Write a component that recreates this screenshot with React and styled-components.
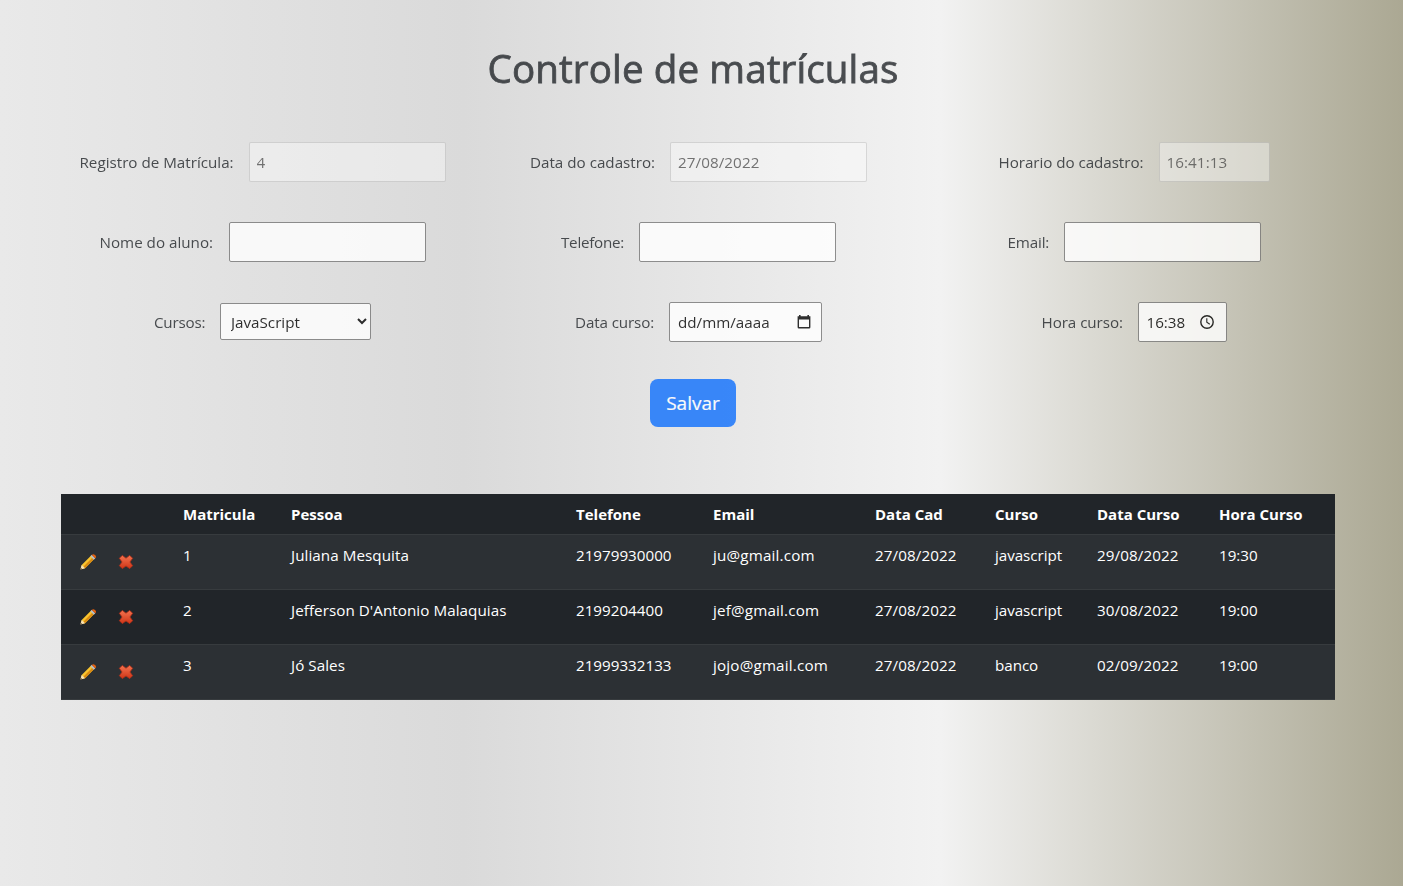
import React from "react";
import styled, { createGlobalStyle } from "styled-components";

const GlobalStyle = createGlobalStyle`
  *, *::before, *::after { box-sizing: border-box; }
  html, body { margin: 0; padding: 0; }
  body {
    font-family: "Open Sans", "Noto Sans", sans-serif;
    font-size: 15.2px;
    line-height: 24px;
    color: #212529;
  }
`;

const Page = styled.main`
  min-height: 886px;
  overflow: hidden;
  background: linear-gradient(to right, #e9e9e9 0%, #dadada 33%, #f2f2f2 67%, #aba893 100%);
`;

const Form = styled.form`
  width: 1386px;
  padding-top: 44px;
  display: flex;
  flex-direction: column;
  align-items: center;
  opacity: 0.8;
`;

const Title = styled.h1`
  margin: 0 0 50px;
  font-size: 38.6px;
  font-weight: 500;
  line-height: 48px;
  letter-spacing: 0.1px;
  -webkit-text-stroke: 0.8px currentColor;
  white-space: nowrap;
`;

const Fields = styled.div`
  display: grid;
  grid-template-columns: 437px 435px 436px;
  grid-template-rows: repeat(3, 40px);
  row-gap: 40px;
  margin-left: 10px;
`;

const Field = styled.div`
  display: flex;
  justify-content: center;
  align-items: center;
  gap: 15px;
`;

const Label = styled.label`
  width: ${(p) => p.$width}px;
  letter-spacing: ${(p) => p.$spacing || 0}px;
  white-space: nowrap;
`;

const Input = styled.input`
  width: ${(p) => p.$width || 197}px;
  height: 40px;
  padding: 1px 7px;
  border: 1px solid #767676;
  border-radius: 2px;
  background: #fff;
  font: inherit;
  letter-spacing: 0.08px;
  color: #212529;
  &:disabled {
    color: #545454;
    border-color: rgba(118, 118, 118, 0.3);
    background: rgba(255, 255, 255, 0.48);
  }
`;

const Select = styled.select`
  width: 151px;
  height: 37px;
  margin-top: -1px;
  padding: 0 6px;
  border: 1px solid #767676;
  border-radius: 2px;
  background: #fff;
  font: inherit;
  color: #000;
`;

const Picker = styled.div`
  width: ${(p) => p.$width}px;
  height: 40px;
  padding: 0 ${(p) => p.$end}px 0 8px;
  display: flex;
  align-items: center;
  justify-content: space-between;
  border: 1px solid #767676;
  border-radius: 2px;
  background: #fff;
  color: #000;
`;

const SaveButton = styled.button`
  width: 86px;
  height: 48px;
  margin-top: 37px;
  padding: 0;
  border: 0;
  border-radius: 8px;
  background: #0d6efd;
  color: #fff;
  font: inherit;
  font-size: 19px;
  -webkit-text-stroke: 0.2px currentColor;
`;

const Table = styled.table`
  width: 1274px;
  margin: 67px 0 0 61px;
  table-layout: fixed;
  border-collapse: separate;
  border-spacing: 0;
  background: #212529;
  color: #fff;
`;

const Row = styled.tr`
  height: ${(p) => (p.$head ? 41 : 55)}px;
  background: ${(p) => (p.$striped ? "#2c3034" : "#212529")};
`;

const Cell = styled.td`
  padding: 8px;
  border-bottom: 1px solid #373b3e;
  vertical-align: top;
  text-align: left;
  white-space: nowrap;
  letter-spacing: ${(p) => p.$spacing || 0}px;
`;

const HeadCell = styled(Cell)`
  font-size: 15px;
  font-weight: 700;
`;

const Actions = styled.div`
  display: flex;
  gap: 22px;
  padding: 11px 0 0 11px;
`;

const Icon = styled.svg`
  display: block;
  width: 16px;
  height: 16px;
`;

const CalendarIcon = () => (
  <Icon viewBox="0 0 16 16" fill="#000" fillRule="evenodd">
    <path d="M3 1h1.6v1.3h6.8V1H13v1.3h1.4V13.2q0 1.3-1.3 1.3H2.9q-1.3 0-1.3-1.3V2.3H3V1Zm0 4.6v7.5h10V5.6H3Z" />
  </Icon>
);

const ClockIcon = () => (
  <Icon viewBox="0 0 16 16" fill="none" stroke="#000" strokeWidth="1.4">
    <circle cx="8" cy="8" r="6.2" />
    <path d="M7.8 4.2v4l3 2.1" strokeWidth="1.1" />
  </Icon>
);

const PencilIcon = () => (
  <Icon viewBox="0 0 16 16">
    <path d="M.4 15.6 1.7 11 11.4 1.3l3.3 3.3L5 14.3Z" fill="#fac52e" />
    <path d="M3.3 12.8 13 3l1.7 1.6L5 14.3Z" fill="#d98a12" />
    <path d="M.4 15.6 1.7 11l1.6 1.5L5 14.3Z" fill="#f8e2b5" />
    <path d="M.1 15.9.9 13.7l1.4 1.5Z" fill="#4c433c" />
    <path d="m10.4 2.3 1.5-1.5 3.4 3.4-1.5 1.5Z" fill="#b6bec5" />
    <path d="M11.8.9Q13.2-.4 15 1t.4 3.2Z" fill="#e7600d" />
  </Icon>
);

const CrossIcon = () => (
  <Icon viewBox="0 0 16 16">
    <defs>
      <linearGradient id="crossFill" x1="0" y1="0" x2="0" y2="1">
        <stop offset="0" stopColor="#f47450" />
        <stop offset="1" stopColor="#cf3517" />
      </linearGradient>
    </defs>
    <path
      d="M4.3 1.4 8 4.3l3.7-2.9 2.9 2.9L11.9 8l2.7 3.7-2.9 2.9L8 11.9l-3.7 2.7-2.9-2.9L4.1 8 1.4 4.3Z"
      fill="url(#crossFill)"
      stroke="#ba3018"
      strokeWidth=".8"
      strokeLinejoin="round"
    />
  </Icon>
);

const columns = [
  ["", 114],
  ["Matricula", 108],
  ["Pessoa", 285],
  ["Telefone", 137],
  ["Email", 162],
  ["Data Cad", 120],
  ["Curso", 102],
  ["Data Curso", 122],
  ["Hora Curso", 124],
];

/* tracking for each data column, in the order of the columns above */
const tracking = [0, 0.06, 0, 0.18, 0.1, -0.05, 0.1, 0];

const students = [
  ["1", "Juliana Mesquita", "21979930000", "ju@gmail.com", "27/08/2022", "javascript", "29/08/2022", "19:30"],
  ["2", "Jefferson D'Antonio Malaquias", "2199204400", "jef@gmail.com", "27/08/2022", "javascript", "30/08/2022", "19:00"],
  ["3", "Jó Sales", "21999332133", "jojo@gmail.com", "27/08/2022", "banco", "02/09/2022", "19:00"],
];

export default function App() {
  return (
    <Page>
      <GlobalStyle />
      <Form>
        <Title>Controle de matrículas</Title>
        <Fields>
          <Field>
            <Label $width={154}>Registro de Matrícula:</Label>
            <Input disabled defaultValue="4" />
          </Field>
          <Field>
            <Label $width={125}>Data do cadastro:</Label>
            <Input disabled defaultValue="27/08/2022" />
          </Field>
          <Field>
            <Label $width={145} $spacing={-0.05}>Horario do cadastro:</Label>
            <Input disabled defaultValue="16:41:13" $width={111} />
          </Field>
          <Field>
            <Label $width={114}>Nome do aluno:</Label>
            <Input />
          </Field>
          <Field>
            <Label $width={63} $spacing={-0.25}>Telefone:</Label>
            <Input />
          </Field>
          <Field>
            <Label $width={41} $spacing={-0.15}>Email:</Label>
            <Input />
          </Field>
          <Field>
            <Label $width={51} $spacing={-0.2}>Cursos:</Label>
            <Select defaultValue="JavaScript">
              <option>JavaScript</option>
            </Select>
          </Field>
          <Field>
            <Label $width={79} $spacing={-0.12}>Data curso:</Label>
            <Picker $width={153} $end={9}>
              dd/mm/aaaa
              <CalendarIcon />
            </Picker>
          </Field>
          <Field>
            <Label $width={81} $spacing={-0.06}>Hora curso:</Label>
            <Picker $width={89} $end={11}>
              16:38
              <ClockIcon />
            </Picker>
          </Field>
        </Fields>
        <SaveButton type="button">Salvar</SaveButton>
      </Form>
      <Table>
        <colgroup>
          {columns.map(([name, width]) => (
            <col key={name} style={{ width }} />
          ))}
        </colgroup>
        <thead>
          <Row $head>
            {columns.map(([name]) => (
              <HeadCell as="th" key={name}>{name}</HeadCell>
            ))}
          </Row>
        </thead>
        <tbody>
          {students.map((student, i) => (
            <Row key={student[0]} $striped={i % 2 === 0}>
              <Cell>
                <Actions>
                  <PencilIcon />
                  <CrossIcon />
                </Actions>
              </Cell>
              {student.map((value, j) => (
                <Cell key={j} $spacing={tracking[j]}>{value}</Cell>
              ))}
            </Row>
          ))}
        </tbody>
      </Table>
    </Page>
  );
}
